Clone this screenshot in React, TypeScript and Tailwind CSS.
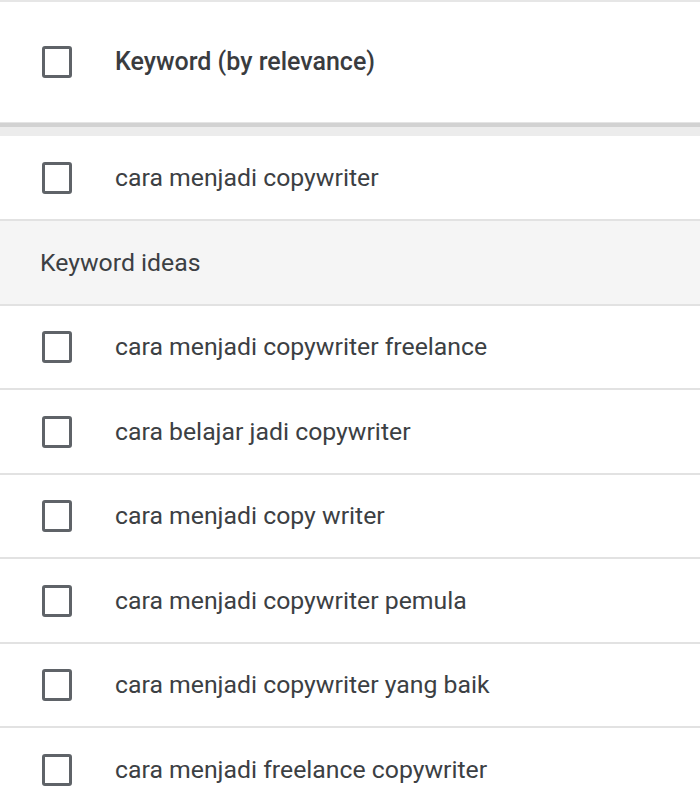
import React from "react";

const Box = () => (
  <div className="w-[30px] h-[32px] shrink-0 rounded-[3px] border-[3px] border-[#5f6368] bg-white" />
);

const rows: { text: string; h: string }[] = [
  { text: "cara menjadi copywriter freelance", h: "h-[84px]" },
  { text: "cara belajar jadi copywriter", h: "h-[85px]" },
  { text: "cara menjadi copy writer", h: "h-[84px]" },
  { text: "cara menjadi copywriter pemula", h: "h-[85px]" },
  { text: "cara menjadi copywriter yang baik", h: "h-[84px]" },
  { text: "cara menjadi freelance copywriter", h: "h-[85px]" },
];

export default function App() {
  return (
    <div
      className="w-[700px] h-[788px] overflow-hidden bg-white text-[#3c4043]"
      style={{ fontFamily: "Roboto, 'Liberation Sans', sans-serif" }}
    >
      <div className="h-[122px] border-t-2 border-[#e6e6e6] flex items-center pl-[42px]">
        <Box />
        <span className="ml-[43px] text-[25px] font-medium text-[#3a3c3f]">
          Keyword (by relevance)
        </span>
      </div>
      <div className="h-[14px] flex flex-col">
        <div className="h-[1px] bg-[#e4e4e4]" />
        <div className="h-[4px] bg-[#d2d2d2]" />
        <div className="flex-1 bg-[#ececec]" />
      </div>
      <div className="h-[85px] border-b-2 border-[#e2e2e2] flex items-center pl-[42px]">
        <Box />
        <span className="ml-[43px] text-[24.8px]">cara menjadi copywriter</span>
      </div>
      <div className="h-[85px] border-b-2 border-[#e2e2e2] bg-[#f5f5f5] flex items-center pl-[40px]">
        <span className="text-[24.8px]">Keyword ideas</span>
      </div>
      {rows.map((r, i) => (
        <div
          key={i}
          className={`${r.h} border-b-2 border-[#e2e2e2] flex items-center pl-[42px]`}
        >
          <Box />
          <span className="ml-[43px] text-[24.8px]">{r.text}</span>
        </div>
      ))}
    </div>
  );
}
